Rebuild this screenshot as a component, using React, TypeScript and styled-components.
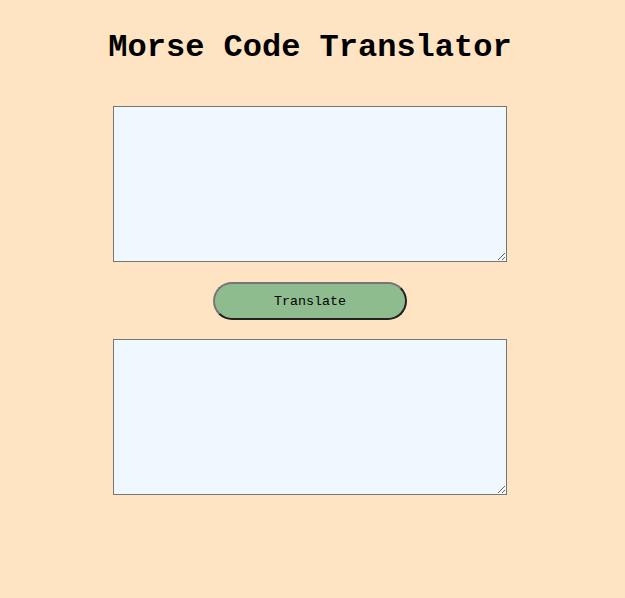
import styled, { createGlobalStyle } from 'styled-components';

const GlobalStyle = createGlobalStyle`
  html, body {
    margin: 0;
    padding: 0;
    background-color: bisque;
  }
`;

export default function App() {
  return (
    <>
      <GlobalStyle />
      <Page>
        <Title>Morse Code Translator</Title>
        <TextBox />
        <TranslateButton type='button'>Translate</TranslateButton>
        <TextBox readOnly />
      </Page>
    </>
  );
}

const Page = styled.div`
  width: 620px;
  display: flex;
  flex-direction: column;
  align-items: center;
  padding-top: 29px;
`;

const Title = styled.h1`
  margin: 0 0 40px;
  font-family: 'Liberation Mono', 'Courier New', monospace;
  font-size: 32px;
  font-weight: 700;
  line-height: 37px;
  color: #000;
`;

const TextBox = styled.textarea`
  box-sizing: border-box;
  width: 394px;
  height: 156px;
  margin: 0;
  padding: 2px;
  background-color: aliceblue;
  border: 1px solid #767676;
  font-family: 'Liberation Mono', monospace;
  font-size: 13px;
`;

const TranslateButton = styled.button`
  box-sizing: border-box;
  width: 194px;
  height: 38px;
  margin: 20px 0 19px;
  background-color: darkseagreen;
  border: 2px outset #767676;
  border-radius: 20px;
  font-family: 'Liberation Mono', 'Courier New', monospace;
  font-size: 13.33px;
  color: #000;
  cursor: pointer;
`;
